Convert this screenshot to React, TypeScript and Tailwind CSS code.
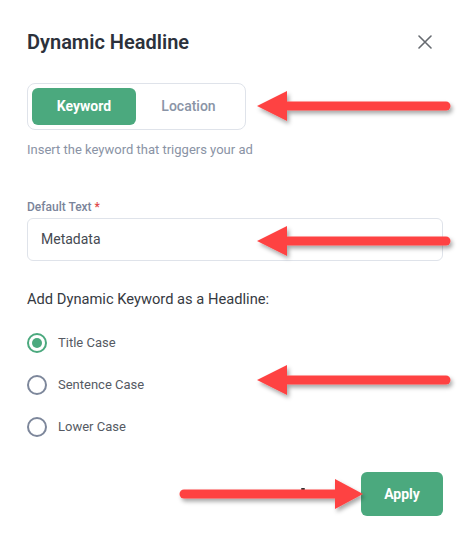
import React from "react";

const GREEN = "#4ba97e";

function LeftArrow({ y }: { y: number }) {
  return (
    <g filter="url(#arrowShadow)">
      <line x1={284} y1={y} x2={446} y2={y} stroke="#fe4343" strokeWidth={9} strokeLinecap="round" />
      <polygon points={`257,${y} 287,${y - 15} 287,${y + 15}`} fill="#fe4343" />
    </g>
  );
}

function Radio({ label, checked }: { label: string; checked?: boolean }) {
  return (
    <label className="flex items-center gap-[11px] h-[20px]">
      <span
        className={
          checked
            ? "w-[20px] h-[20px] rounded-full border-2 border-[#4ba97e] flex items-center justify-center"
            : "w-[20px] h-[20px] rounded-full border-2 border-[#7d879b]"
        }
      >
        {checked && <span className="w-[10px] h-[10px] rounded-full bg-[#4ba97e]" />}
      </span>
      <span className="text-[13px] text-[#555a63]">{label}</span>
    </label>
  );
}

export default function App() {
  return (
    <div
      className="relative w-[472px] h-[542px] bg-white pl-[27px] pr-[29px] overflow-hidden"
      style={{ fontFamily: "Roboto, 'Noto Sans', sans-serif" }}
    >
      <div className="pt-[30px] flex items-center justify-between pr-[11px]">
        <h1 className="text-[20px] leading-[24px] font-semibold text-[#2c313b]">Dynamic Headline</h1>
        <svg width="14" height="14" viewBox="0 0 14 14" className="text-[#666a70]">
          <path d="M1 1L13 13M13 1L1 13" stroke="currentColor" strokeWidth="1.6" strokeLinecap="round" />
        </svg>
      </div>

      <div className="mt-[29px] w-[219px] h-[47px] rounded-lg border border-[#dfe3ea] p-[4px] flex">
        <button className="w-[104px] rounded-md text-white text-[14px] font-bold" style={{ backgroundColor: GREEN }}>
          Keyword
        </button>
        <button className="flex-1 text-[14px] font-medium text-[#8a94a6]">Location</button>
      </div>

      <p className="mt-[12px] text-[13px] leading-[16px] text-[#8a93a5]">Insert the keyword that triggers your ad</p>

      <div className="mt-[41px] text-[12px] leading-[16px] font-medium text-[#7a849a]">
        Default Text <span className="text-[#e04848]">*</span>
      </div>
      <div className="mt-[3px] h-[43px] rounded-md border border-[#dfe3ea] flex items-center px-[13px] text-[14px] text-[#454a52]">
        Metadata
      </div>

      <div className="mt-[28px] text-[14.7px] leading-[20px] text-[#363a42]">
        Add Dynamic Keyword as a Headline:
      </div>

      <div className="mt-[24px] flex flex-col gap-[22px]">
        <Radio label="Title Case" checked />
        <Radio label="Sentence Case" />
        <Radio label="Lower Case" />
      </div>

      <div className="mt-[35px] flex justify-end items-center gap-[56px]">
        <span className="w-[4px] h-[2px] bg-[#333] rounded-full -mt-[10px]" />
        <button
          className="w-[82px] h-[44px] rounded-md text-white text-[14px] font-bold"
          style={{ backgroundColor: GREEN }}
        >
          Apply
        </button>
      </div>

      <svg className="absolute inset-0 pointer-events-none" width="472" height="542" viewBox="0 0 472 542">
        <defs>
          <filter id="arrowShadow" x="-10%" y="-50%" width="130%" height="200%">
            <feDropShadow dx="2" dy="3" stdDeviation="2" floodColor="#000" floodOpacity="0.35" />
          </filter>
        </defs>
        <LeftArrow y={106} />
        <LeftArrow y={241} />
        <LeftArrow y={380} />
        <g filter="url(#arrowShadow)">
          <line x1={184} y1={494} x2={338} y2={494} stroke="#fe4343" strokeWidth={9} strokeLinecap="round" />
          <polygon points="363,494 335,479 335,509" fill="#fe4343" />
        </g>
      </svg>
    </div>
  );
}
